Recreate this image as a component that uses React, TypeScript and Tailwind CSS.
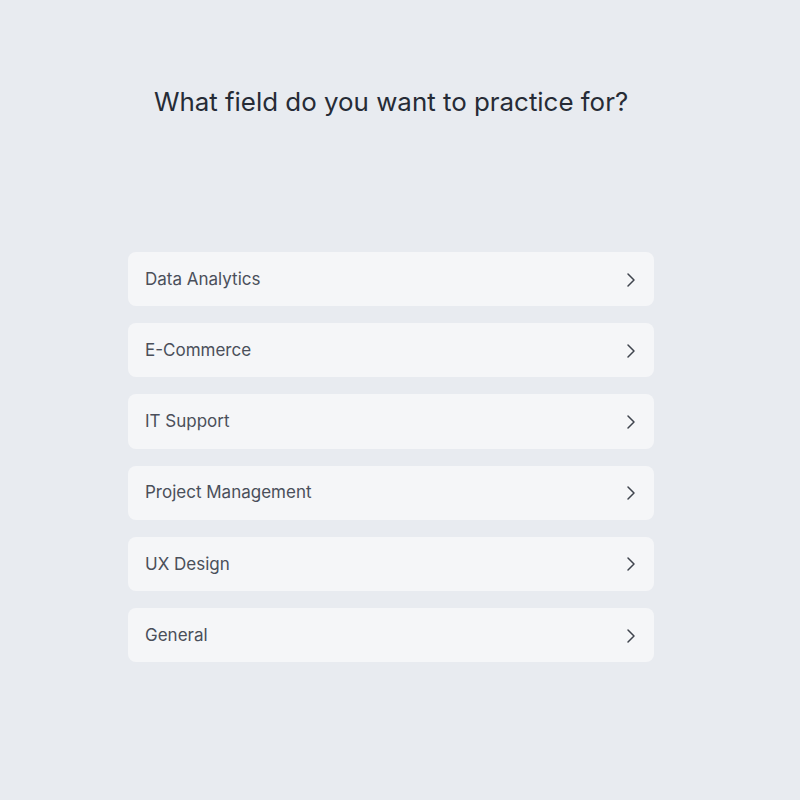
import { ChevronRight } from "lucide-react";

const fields = [
  "Data Analytics",
  "E-Commerce",
  "IT Support",
  "Project Management",
  "UX Design",
  "General",
];

function FieldRow({ label }: { label: string }) {
  return (
    <button className="flex h-[54.2px] w-full items-center justify-between rounded-lg bg-[#f5f6f8] pl-[17px] pr-[11px] pt-px text-left">
      <span className="text-[17px] text-[#4a4f5a]">{label}</span>
      <ChevronRight size={24} strokeWidth={1.5} className="text-[#3f444d]" aria-hidden="true" />
    </button>
  );
}

export default function App() {
  return (
    <div
      className="min-h-[800px] w-full bg-[#e8ebf0] pt-[84px]"
      style={{ fontFamily: "Inter, 'Open Sans', sans-serif" }}
    >
      <div className="ml-[128px] flex w-[526px] flex-col">
        <h1 className="text-center text-[25.9px] font-normal leading-[36px] text-[#262b36]">
          What field do you want to practice for?
        </h1>
        <div className="mt-[132px] flex flex-col gap-[17px]">
          {fields.map((f) => (
            <FieldRow key={f} label={f} />
          ))}
        </div>
      </div>
    </div>
  );
}
